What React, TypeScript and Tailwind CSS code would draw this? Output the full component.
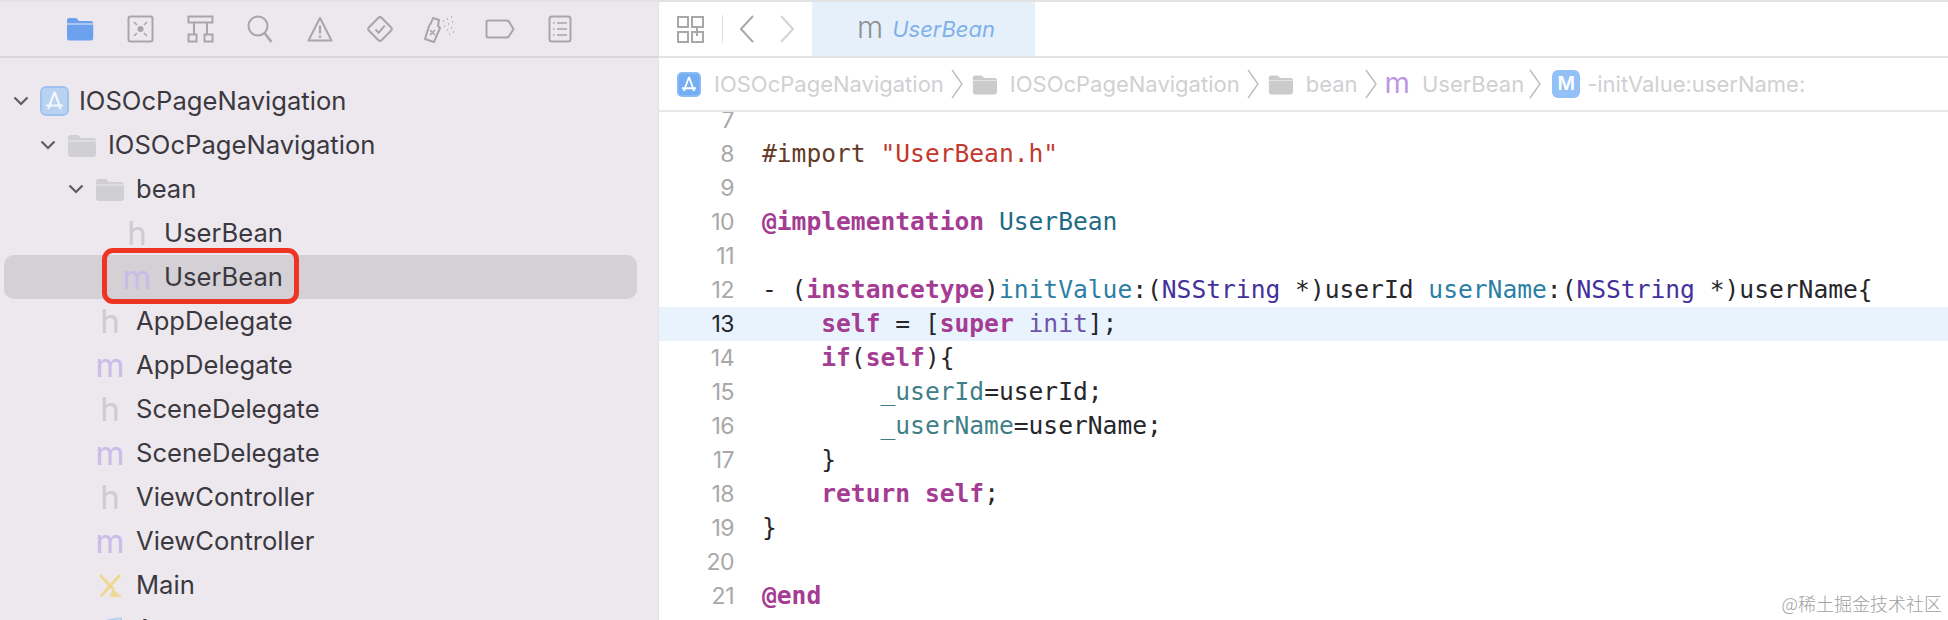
import React from 'react';

const GRAY = '#a8a5ab';

const FolderBlue = () => (
  <svg width="28" height="24" viewBox="0 0 28 24">
    <path d="M1 5V3.500C1 2 2 1 3.500 1H9c1.200 0 1.800.5 2.600 1.400L13 4h12c1.300 0 2.200 1 2.200 2.300v15c0 1.300-.9 2.200-2.200 2.200H3c-1.200 0-2-.9-2-2.200V5z" fill="#6ca1ee" />
    <path d="M1 7h26.200" stroke="#ece8ee" strokeWidth="1" />
  </svg>
);

const GrayFolder = ({ w = 29, h = 23, fill = '#d0cfd4' }: { w?: number; h?: number; fill?: string }) => (
  <svg width={w} height={h} viewBox="0 0 29 23">
    <path d="M1 5V3.500C1 2 2 1 3.500 1H10c1.200 0 1.800.5 2.600 1.400L14 4h12.500C28 4 29 5 29 6.300V20c0 1.800-1 3-2.800 3H3.500C2 23 1 22 1 20.300V5z" fill={fill} />
    <path d="M1 7h28" stroke="#ece8ee" strokeWidth="1" />
  </svg>
);

const TabIcons = () => {
  const s = { fill: 'none', stroke: GRAY, strokeWidth: 2 };
  return (
    <>
      <div className="w-[60px] flex justify-center"><FolderBlue /></div>
      <div className="w-[60px] flex justify-center">
        <svg width="27" height="28" viewBox="0 0 27 28" {...s}>
          <rect x="1.500" y="1.500" width="24" height="25" rx="2" />
          <circle cx="13.500" cy="14" r="3" fill={GRAY} stroke="none" />
          <path d="M7 7l3 3M20 7l-3 3M7 21l3-3M20 21l-3-3" strokeWidth="1.500" />
        </svg>
      </div>
      <div className="w-[60px] flex justify-center">
        <svg width="27" height="28" viewBox="0 0 27 28" {...s}>
          <rect x="1.500" y="1.500" width="24" height="6" />
          <path d="M7 8v11M20 8v11" />
          <rect x="1.500" y="19.500" width="8" height="7" />
          <rect x="17.500" y="19.500" width="8" height="7" />
        </svg>
      </div>
      <div className="w-[60px] flex justify-center">
        <svg width="26" height="28" viewBox="0 0 26 28" {...s}>
          <circle cx="11" cy="11" r="9.500" />
          <path d="M17.500 18l7 9" strokeWidth="2.500" />
        </svg>
      </div>
      <div className="w-[60px] flex justify-center">
        <svg width="26" height="26" viewBox="0 0 26 26" {...s}>
          <path d="M13 2L24.500 24.500H1.500L13 2z" strokeLinejoin="round" />
          <path d="M13 9.500v8M13 19.500v2.500" strokeWidth="2.200" />
        </svg>
      </div>
      <div className="w-[60px] flex justify-center">
        <svg width="28" height="28" viewBox="0 0 28 28" {...s}>
          <rect x="5" y="5" width="18" height="18" rx="2.500" transform="rotate(45 14 14)" />
          <path d="M9.500 14.500l3.200 3.200 6-7" />
        </svg>
      </div>
      <div className="w-[60px] flex justify-center">
        <svg width="34" height="28" viewBox="0 0 34 28" fill="none" stroke={GRAY} strokeWidth="2">
          <path d="M8 8L10 3l6 2-1 6 2 2-6 14-9-3 4-13z" strokeLinejoin="round" />
          <path d="M7 15l5 5M12 15l-5 5" strokeWidth="1.500" />
          <path d="M20 6h1M24 4h1M28 2h1M21 11h1M25 9h1M29 7h1M24 15h1M28 13h1M26 19h1M30 17h1" strokeWidth="1.300" />
        </svg>
      </div>
      <div className="w-[60px] flex justify-center">
        <svg width="30" height="20" viewBox="0 0 30 20" {...s}>
          <path d="M3 1.500h18.500c1 0 1.700.4 2.300 1L28.500 10l-4.700 7.500c-.6.7-1.300 1-2.300 1H3c-1 0-1.500-.6-1.500-1.500V3c0-1 .5-1.500 1.500-1.500z" />
        </svg>
      </div>
      <div className="w-[60px] flex justify-center">
        <svg width="24" height="28" viewBox="0 0 24 28" {...s}>
          <rect x="1.500" y="1.500" width="21" height="25" rx="2.500" />
          <path d="M5 8h1.500M9 8h10M5 14h1.500M9 14h10M5 20h1.500M9 20h10" strokeWidth="1.500" />
        </svg>
      </div>
    </>
  );
};

const AppIcon = ({ strong }: { strong?: boolean }) => (
  <svg width={strong ? 24 : 29} height={strong ? 25 : 30} viewBox="0 0 29 30">
    <rect x="1" y="1" width="27" height="28" rx="5" fill={strong ? '#74aef2' : '#b9d2f1'} stroke={strong ? '#8dbdf4' : '#9fc3f0'} strokeWidth="2" />
    <path d="M14.500 6L9 21M14.500 6L20 21M6 19.500h17" stroke={strong ? '#ffffff' : '#f4f7fc'} strokeWidth="2.200" fill="none" />
    <path d="M8 23l2-3M21 23l-2-3" stroke={strong ? '#ffffff' : '#f4f7fc'} strokeWidth="2" />
  </svg>
);

const Chevron = () => (
  <svg width="16" height="10" viewBox="0 0 16 10" fill="none" stroke="#5e5b62" strokeWidth="2.200">
    <path d="M1.500 1.500L8 8l6.500-6.500" />
  </svg>
);

const Crumb = () => (
  <svg width="12" height="30" viewBox="0 0 12 30" fill="none" stroke="#bcbcbc" strokeWidth="1.400" className="shrink-0">
    <path d="M1 1l10 14L1 29" />
  </svg>
);

const HGlyph = () => (
  <span className="font-['Inter'] font-normal text-[33px] leading-none text-[#cdcbd1]">h</span>
);
const MGlyph = () => (
  <span className="font-['Inter'] font-normal text-[33px] leading-none text-[#cbbbe9]">m</span>
);

const StoryIcon = () => (
  <svg width="25" height="25" viewBox="0 0 25 25" fill="none" stroke="#f0d893" strokeWidth="3">
    <path d="M2 2l14 15M22 2L3 23" />
    <path d="M15 17l8 6.500h-11z" fill="#f0d893" strokeWidth="1" />
  </svg>
);

const AssetIcon = () => (
  <svg width="28" height="24" viewBox="0 0 28 24">
    <path d="M1 5l24-4 2 20L3 24z" fill="#d5e6f7" stroke="#a9cdf0" strokeWidth="1.500" />
  </svg>
);

const Row = ({ pad, chevron, icon, label, gap }: { pad: string; chevron?: boolean; icon: React.ReactNode; label: string; gap: string }) => (
  <div className={`h-[44px] flex items-center ${pad}`}>
    {chevron && <div className="w-[26px] flex items-center"><Chevron /></div>}
    <div className="w-[30px] flex items-center justify-center">{icon}</div>
    <span className={`${gap} text-[#3b3840] text-[25.600px] leading-none whitespace-nowrap`}>{label}</span>
  </div>
);

const kw = 'text-[#a53c93] font-bold';
const tx = 'text-[#26262b]';
const nm = 'text-[#2b7fa5]';
const ty = 'text-[#43309b]';
const iv = 'text-[#3f8088]';

const code: [string, string][][] = [
  [],
  [['#import ', 'text-[#653b27]'], ['"UserBean.h"', 'text-[#c3392e]']],
  [],
  [['@implementation', kw], [' ', tx], ['UserBean', 'text-[#1f6b85]']],
  [],
  [['- (', tx], ['instancetype', kw], [')', tx], ['initValue', nm], [':(', tx], ['NSString', ty], [' *)userId ', tx], ['userName', nm], [':(', tx], ['NSString', ty], [' *)userName{', tx]],
  [['    ', tx], ['self', kw], [' = [', tx], ['super', kw], [' ', tx], ['init', 'text-[#6d54a8]'], ['];', tx]],
  [['    ', tx], ['if', kw], ['(', tx], ['self', kw], ['){', tx]],
  [['        ', tx], ['_userId', iv], ['=userId;', tx]],
  [['        ', tx], ['_userName', iv], ['=userName;', tx]],
  [['    }', tx]],
  [['    ', tx], ['return', kw], [' ', tx], ['self', kw], [';', tx]],
  [['}', tx]],
  [],
  [['@end', kw]],
];

export default function App() {
  return (
    <div className="w-[1948px] h-[620px] bg-white flex flex-col overflow-hidden font-['Inter',sans-serif] relative">
      <div className="h-[2px] bg-[#e2e2e2] shrink-0" />
      <div className="flex flex-1 min-h-0">
        <aside className="w-[659px] shrink-0 bg-[#ece8ee] border-r border-[#e3e1e5] overflow-hidden">
          <div className="h-[56px] pl-[50px] flex items-center border-b-2 border-[#d9d6db]">
            <TabIcons />
          </div>
          <div className="pt-[21px]">
            <Row pad="pl-[13px]" gap="ml-[10px]" chevron icon={<AppIcon />} label="IOSOcPageNavigation" />
            <Row pad="pl-[40px]" gap="ml-[12px]" chevron icon={<GrayFolder />} label="IOSOcPageNavigation" />
            <Row pad="pl-[68px]" gap="ml-[12px]" chevron icon={<GrayFolder />} label="bean" />
            <Row pad="pl-[122px]" gap="ml-[12px]" icon={<HGlyph />} label="UserBean" />
            <div className="relative ml-1 w-[633px] rounded-[10px] bg-[#d3d0d6]">
              <Row pad="pl-[118px]" gap="ml-[12px]" icon={<MGlyph />} label="UserBean" />
              <div className="absolute left-[98px] -top-[7px] w-[197px] h-[56px] rounded-[11px] border-[5px] border-[#ee3524]" />
            </div>
            <Row pad="pl-[95px]" gap="ml-[11px]" icon={<HGlyph />} label="AppDelegate" />
            <Row pad="pl-[95px]" gap="ml-[11px]" icon={<MGlyph />} label="AppDelegate" />
            <Row pad="pl-[95px]" gap="ml-[11px]" icon={<HGlyph />} label="SceneDelegate" />
            <Row pad="pl-[95px]" gap="ml-[11px]" icon={<MGlyph />} label="SceneDelegate" />
            <Row pad="pl-[95px]" gap="ml-[11px]" icon={<HGlyph />} label="ViewController" />
            <Row pad="pl-[95px]" gap="ml-[11px]" icon={<MGlyph />} label="ViewController" />
            <Row pad="pl-[95px]" gap="ml-[11px]" icon={<StoryIcon />} label="Main" />
            <Row pad="pl-[95px]" gap="ml-[11px]" icon={<AssetIcon />} label="Assets" />
          </div>
        </aside>

        <main className="flex-1 min-w-0 flex flex-col">
          <div className="h-[56px] shrink-0 flex items-stretch border-b-2 border-[#e4e4e4]">
            <div className="pl-[18px] flex items-center">
              <svg width="27" height="27" viewBox="0 0 27 27" fill="none" stroke="#a8a8a8" strokeWidth="2">
                <rect x="1" y="1" width="10" height="10" />
                <path d="M15 1h11v10h-11z" />
                <rect x="1" y="16" width="10" height="10" />
                <path d="M15 16h11v10h-11zM20 12v8" />
              </svg>
              <div className="ml-[18px] w-[1px] h-[28px] bg-[#e0e0e0]" />
              <svg width="14" height="28" viewBox="0 0 14 28" fill="none" stroke="#a9a9a9" strokeWidth="2" className="ml-[17px]">
                <path d="M13 1L1 14l12 13" />
              </svg>
              <svg width="14" height="28" viewBox="0 0 14 28" fill="none" stroke="#d4d4d4" strokeWidth="2" className="ml-[26px]">
                <path d="M1 1l12 13L1 27" />
              </svg>
            </div>
            <div className="ml-[18px] w-[223px] bg-[#e6f0fb] flex items-center pl-[45px]">
              <span className="text-[30px] leading-none font-light text-[#8d9094] relative -top-[2px]">m</span>
              <span className="ml-[9px] text-[22px] italic text-[#7fb0ea] leading-none">UserBean</span>
            </div>
          </div>

          <div className="h-[54px] shrink-0 pl-[18px] flex items-center border-b-2 border-[#e8e8e8] text-[22px] text-[#d0d0d2] whitespace-nowrap">
            <AppIcon strong />
            <span className="ml-[13px]">IOSOcPageNavigation</span>
            <div className="ml-[7px]"><Crumb /></div>
            <div className="ml-[9px]"><GrayFolder w={25} h={21} fill="#cbcbcb" /></div>
            <span className="ml-[13px]">IOSOcPageNavigation</span>
            <div className="ml-[7px]"><Crumb /></div>
            <div className="ml-[9px]"><GrayFolder w={25} h={21} fill="#cbcbcb" /></div>
            <span className="ml-[13px]">bean</span>
            <div className="ml-[7px]"><Crumb /></div>
            <span className="ml-[8px] text-[29px] leading-none text-[#bd97e0] relative -top-[2px]">m</span>
            <span className="ml-[12px]">UserBean</span>
            <div className="ml-[5px]"><Crumb /></div>
            <div className="ml-[11px] w-[28px] h-[28px] rounded-[6px] bg-[#93c1f7] flex items-center justify-center text-white text-[19px] font-semibold">M</div>
            <span className="ml-[7px]">-initValue:userName:</span>
          </div>

          <div className="flex-1 min-h-0 overflow-hidden">
            <div className="-mt-[9px]">
              {code.map((tokens, i) => {
                const n = i + 7;
                return (
                  <div key={n} className={`h-[34px] flex items-center ${n === 13 ? 'bg-[#e9f3fd]' : ''}`}>
                    <span className={`w-[75px] text-right text-[23px] leading-none tracking-[-0.5px] ${n === 13 ? 'text-[#26262b]' : 'text-[#a8a8ab]'}`}>{n}</span>
                    <span className="ml-[28px] font-['DejaVu_Sans_Mono',monospace] text-[24.600px] leading-none whitespace-pre">
                      {tokens.map((t, j) => <span key={j} className={t[1]}>{t[0]}</span>)}
                    </span>
                  </div>
                );
              })}
            </div>
          </div>
        </main>
      </div>
      <div className="absolute right-[6px] bottom-[8px] text-[18px] leading-none text-[#a0a0a0] font-['Noto_Sans_CJK_SC',sans-serif] font-light whitespace-nowrap">@稀土掘金技术社区</div>
    </div>
  );
}
